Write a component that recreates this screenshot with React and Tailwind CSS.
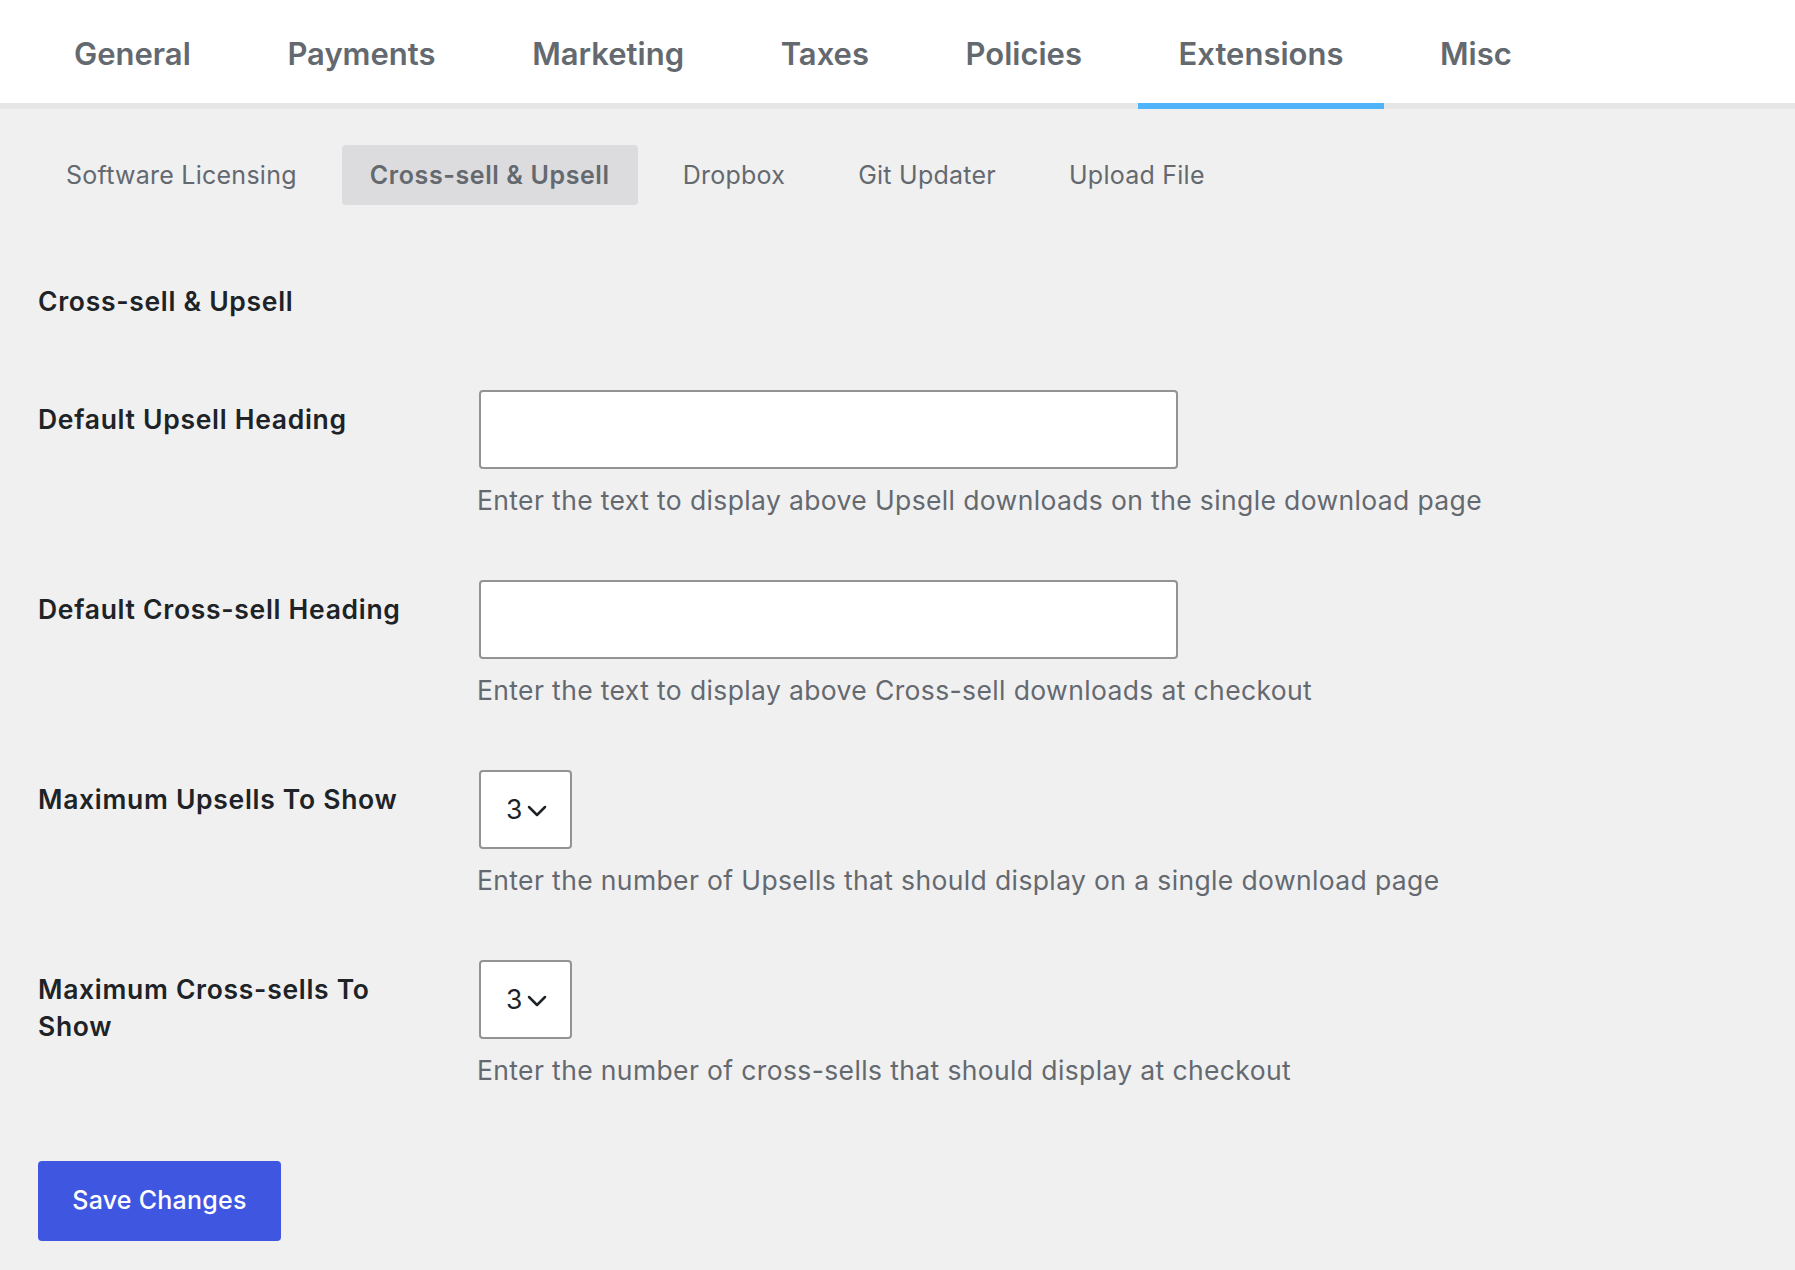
import React from "react";

const topTabs = ["General", "Payments", "Marketing", "Taxes", "Policies", "Extensions", "Misc"];
const subTabs = ["Software Licensing", "Cross-sell & Upsell", "Dropbox", "Git Updater", "Upload File"];

function Chevron() {
  return (
    <svg width="20" height="12" viewBox="0 0 20 12" fill="none" className="ml-[5px] mt-[2px]">
      <path d="M2 2 L10 10 L18 2" stroke="#1d2327" strokeWidth="2.5" strokeLinecap="round" strokeLinejoin="round" />
    </svg>
  );
}

function Row({ label, desc, children }) {
  return (
    <div className="flex">
      <div className="w-[441px] shrink-0 pr-[50px] pt-[11px] text-[26.5px] tracking-[0.7px] leading-[37px] font-semibold text-[#1d2327]">
        {label}
      </div>
      <div className="flex flex-col items-start">
        {children}
        <div className="mt-[13px] -ml-[2px] text-[26.5px] tracking-[0.37px] leading-[36px] text-[#646970]">{desc}</div>
      </div>
    </div>
  );
}

function TextInput() {
  return <div className="w-[699px] h-[79px] bg-white border-[2px] border-[#939393] rounded-[4px]" />;
}

function Select() {
  return (
    <div className="w-[93px] h-[79px] bg-white border-[2px] border-[#939393] rounded-[4px] flex items-center pl-[25px] text-[26.5px] text-[#1d2327]">
      <span>3</span>
      <Chevron />
    </div>
  );
}

export default function App() {
  return (
    <div className="min-h-[1270px] bg-[#f0f0f0]" style={{ fontFamily: "Inter, 'Noto Sans', sans-serif" }}>
      <div className="bg-white border-b-[6px] border-[#e6e6e6] pl-[33px] flex gap-[14.6px]">
        {topTabs.map((t) => (
          <div
            key={t}
            className={
              "h-[109px] -mb-[6px] px-[41px] pt-[5px] flex items-center text-[31px] font-semibold text-[#646970] border-b-[6px] " +
              (t === "Extensions" ? "border-[#50b4fa]" : "border-transparent")
            }
          >
            {t}
          </div>
        ))}
      </div>

      <div className="pl-[38px]">
        <div className="mt-[36px] flex gap-[17px]">
          {subTabs.map((t) => (
            <div
              key={t}
              className={
                "h-[60px] px-[28px] pt-[2px] flex items-center text-[25px] rounded-[4px] text-[#646970] " +
                (t === "Cross-sell & Upsell" ? "bg-[#dcdcde] font-semibold tracking-[0.6px]" : "tracking-[0.25px]")
              }
            >
              {t}
            </div>
          ))}
        </div>

        <h2 className="mt-[78px] text-[26.5px] tracking-[0.7px] leading-[36px] font-semibold text-[#1d2327]">Cross-sell &amp; Upsell</h2>

        <div className="mt-[71px] flex flex-col gap-[62px]">
          <Row label="Default Upsell Heading" desc="Enter the text to display above Upsell downloads on the single download page">
            <TextInput />
          </Row>
          <Row label="Default Cross-sell Heading" desc="Enter the text to display above Cross-sell downloads at checkout">
            <TextInput />
          </Row>
          <Row label="Maximum Upsells To Show" desc="Enter the number of Upsells that should display on a single download page">
            <Select />
          </Row>
          <Row label="Maximum Cross-sells To Show" desc="Enter the number of cross-sells that should display at checkout">
            <Select />
          </Row>
        </div>

        <button className="mt-[73px] w-[243px] h-[80px] rounded-[4px] bg-[#3f57e0] text-white text-[25px] tracking-[0.25px] font-medium flex items-center justify-center">
          Save Changes
        </button>
      </div>
    </div>
  );
}
